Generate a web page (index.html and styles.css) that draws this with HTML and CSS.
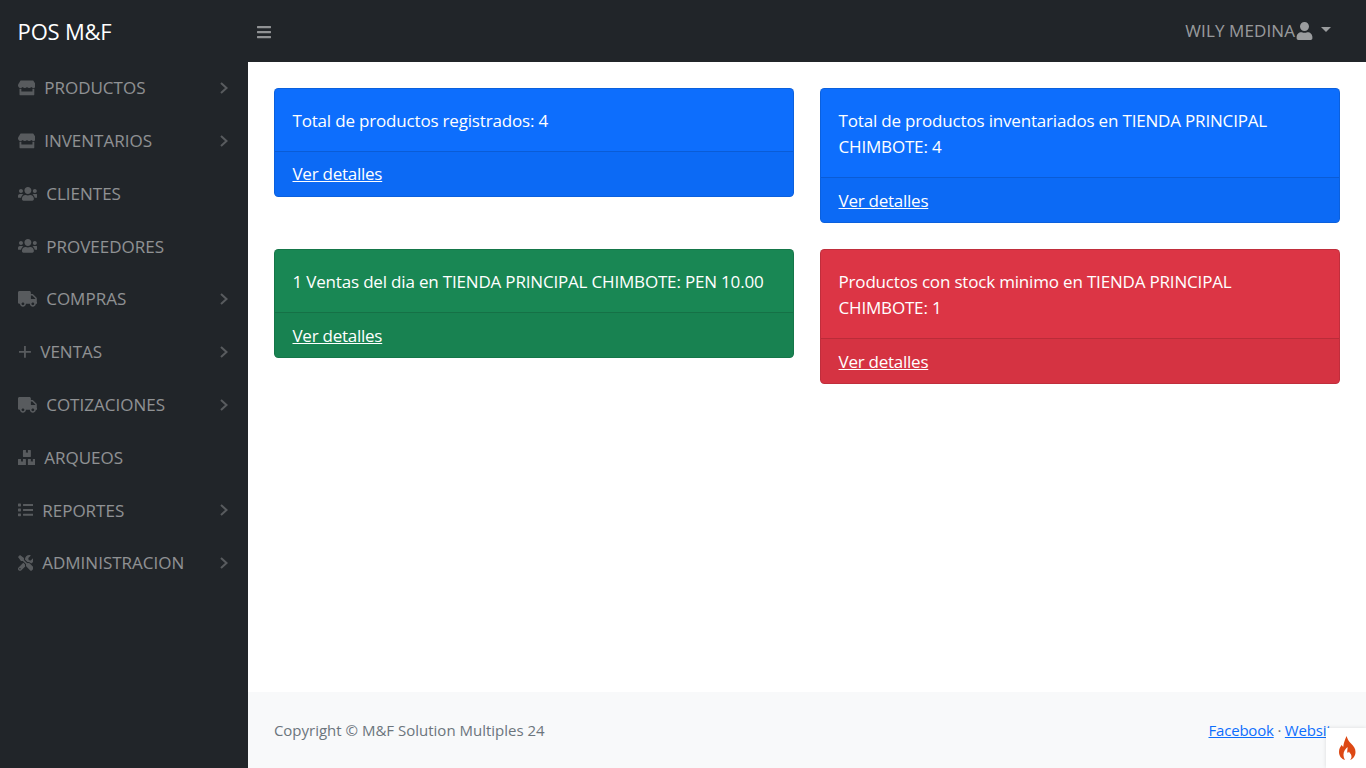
FILE: index.html
```html
<!DOCTYPE html>
<html lang="es">
<head>
<meta charset="utf-8">
<title>POS M&amp;F</title>
<link rel="stylesheet" href="styles.css">
</head>
<body>
<header class="topbar">
  <a class="brand" href="#">POS M&amp;F</a>
  <button class="toggle" type="button" aria-label="menu">
    <svg class="ico-bars" viewBox="0 0 448 512"><path d="M16 132h416c8.837 0 16-7.163 16-16V76c0-8.837-7.163-16-16-16H16C7.163 60 0 67.163 0 76v40c0 8.837 7.163 16 16 16zm0 160h416c8.837 0 16-7.163 16-16v-40c0-8.837-7.163-16-16-16H16c-8.837 0-16 7.163-16 16v40c0 8.837 7.163 16 16 16zm0 160h416c8.837 0 16-7.163 16-16v-40c0-8.837-7.163-16-16-16H16c-8.837 0-16 7.163-16 16v40c0 8.837 7.163 16 16 16z"/></svg>
  </button>
  <a class="user" href="#">
    <span class="user-name">WILY MEDINA</span>
    <svg class="ico-user" viewBox="0 0 448 512"><path d="M224 256c70.7 0 128-57.3 128-128S294.7 0 224 0 96 57.3 96 128s57.3 128 128 128zm89.6 32h-16.7c-22.2 10.2-46.9 16-72.9 16s-50.6-5.8-72.9-16h-16.7C60.2 288 0 348.2 0 422.4V464c0 26.5 21.5 48 48 48h352c26.5 0 48-21.5 48-48v-41.6c0-74.2-60.2-134.4-134.4-134.4z"/></svg>
    <i class="caret"></i>
  </a>
</header>
<div class="shell">
  <nav class="sidebar">
    <a class="nav-link" href="#"><svg class="ico w-store" viewBox="0 0 616 512"><path d="M602 118.6L537.1 15C531.3 5.7 521 0 510 0H106C95 0 84.7 5.7 78.9 15L14 118.6c-33.9 54.1-3.9 129.3 59.4 137.9 4.6.6 9.1.9 13.7.9 29.9 0 56.4-13.1 74.8-33.4 18.4 20.3 45 33.4 74.8 33.4 29.9 0 56.4-13.1 74.8-33.4 18.4 20.3 45 33.4 74.8 33.4 29.9 0 56.4-13.1 74.8-33.4 18.5 20.3 45 33.4 74.8 33.4 4.7 0 9.2-.3 13.7-.9 63.5-8.5 93.6-83.7 59.6-137.9zM529.5 288c-10 0-19.9-1.5-29.5-3.8V384H116v-99.8c-9.6 2.2-19.5 3.8-29.5 3.8-6 0-12.1-.4-18-1.2-5.6-.8-11.1-2.1-16.4-3.6V480c0 17.7 14.3 32 32 32h448c17.7 0 32-14.3 32-32V283.2c-5.4 1.6-10.8 2.9-16.4 3.6-6.1.8-12.1 1.2-18.2 1.2z"/></svg><span class="label">PRODUCTOS</span><svg class="chev" viewBox="0 0 8 12"><path d="M1 1l5.5 5L1 11"/></svg></a>
    <a class="nav-link" href="#"><svg class="ico w-store" viewBox="0 0 616 512"><path d="M602 118.6L537.1 15C531.3 5.7 521 0 510 0H106C95 0 84.7 5.7 78.9 15L14 118.6c-33.9 54.1-3.9 129.3 59.4 137.9 4.6.6 9.1.9 13.7.9 29.9 0 56.4-13.1 74.8-33.4 18.4 20.3 45 33.4 74.8 33.4 29.9 0 56.4-13.1 74.8-33.4 18.4 20.3 45 33.4 74.8 33.4 29.9 0 56.4-13.1 74.8-33.4 18.5 20.3 45 33.4 74.8 33.4 4.7 0 9.2-.3 13.7-.9 63.5-8.5 93.6-83.7 59.6-137.9zM529.5 288c-10 0-19.9-1.5-29.5-3.8V384H116v-99.8c-9.6 2.2-19.5 3.8-29.5 3.8-6 0-12.1-.4-18-1.2-5.6-.8-11.1-2.1-16.4-3.6V480c0 17.7 14.3 32 32 32h448c17.7 0 32-14.3 32-32V283.2c-5.4 1.6-10.8 2.9-16.4 3.6-6.1.8-12.1 1.2-18.2 1.2z"/></svg><span class="label">INVENTARIOS</span><svg class="chev" viewBox="0 0 8 12"><path d="M1 1l5.5 5L1 11"/></svg></a>
    <a class="nav-link" href="#"><svg class="ico w-wide" viewBox="0 0 640 512"><path d="M96 224c35.3 0 64-28.7 64-64s-28.7-64-64-64-64 28.7-64 64 28.7 64 64 64zm448 0c35.3 0 64-28.7 64-64s-28.7-64-64-64-64 28.7-64 64 28.7 64 64 64zm32 32h-64c-17.6 0-33.5 7.1-45.1 18.6 40.3 22.1 68.9 62 75.1 109.4h66c17.7 0 32-14.3 32-32v-32c0-35.3-28.7-64-64-64zm-256 0c61.9 0 112-50.1 112-112S381.9 32 320 32 208 82.1 208 144s50.1 112 112 112zm76.8 32h-8.3c-20.8 10-43.9 16-68.5 16s-47.6-6-68.5-16h-8.3C179.6 288 128 339.6 128 403.2V432c0 26.5 21.5 48 48 48h288c26.5 0 48-21.5 48-48v-28.8c0-63.6-51.6-115.2-115.2-115.2zm-223.7-13.4C161.5 263.1 145.6 256 128 256H64c-35.3 0-64 28.7-64 64v32c0 17.7 14.3 32 32 32h65.9c6.3-47.4 34.9-87.3 75.2-109.4z"/></svg><span class="label">CLIENTES</span></a>
    <a class="nav-link" href="#"><svg class="ico w-wide" viewBox="0 0 640 512"><path d="M96 224c35.3 0 64-28.7 64-64s-28.7-64-64-64-64 28.7-64 64 28.7 64 64 64zm448 0c35.3 0 64-28.7 64-64s-28.7-64-64-64-64 28.7-64 64 28.7 64 64 64zm32 32h-64c-17.6 0-33.5 7.1-45.1 18.6 40.3 22.1 68.9 62 75.1 109.4h66c17.7 0 32-14.3 32-32v-32c0-35.3-28.7-64-64-64zm-256 0c61.9 0 112-50.1 112-112S381.9 32 320 32 208 82.1 208 144s50.1 112 112 112zm76.8 32h-8.3c-20.8 10-43.9 16-68.5 16s-47.6-6-68.5-16h-8.3C179.6 288 128 339.6 128 403.2V432c0 26.5 21.5 48 48 48h288c26.5 0 48-21.5 48-48v-28.8c0-63.6-51.6-115.2-115.2-115.2zm-223.7-13.4C161.5 263.1 145.6 256 128 256H64c-35.3 0-64 28.7-64 64v32c0 17.7 14.3 32 32 32h65.9c6.3-47.4 34.9-87.3 75.2-109.4z"/></svg><span class="label">PROVEEDORES</span></a>
    <a class="nav-link" href="#"><svg class="ico w-wide" viewBox="0 0 640 512"><path d="M624 352h-16V243.9c0-12.7-5.1-24.9-14.1-33.9L494 110.1c-9-9-21.2-14.1-33.9-14.1H416V48c0-26.5-21.5-48-48-48H48C21.5 0 0 21.5 0 48v320c0 26.5 21.5 48 48 48h16c0 53 43 96 96 96s96-43 96-96h128c0 53 43 96 96 96s96-43 96-96h48c8.8 0 16-7.2 16-16v-32c0-8.8-7.2-16-16-16zM160 464c-26.5 0-48-21.5-48-48s21.5-48 48-48 48 21.5 48 48-21.5 48-48 48zm320 0c-26.5 0-48-21.5-48-48s21.5-48 48-48 48 21.5 48 48-21.5 48-48 48zm80-208H416V144h44.1l99.9 99.9V256z"/></svg><span class="label">COMPRAS</span><svg class="chev" viewBox="0 0 8 12"><path d="M1 1l5.5 5L1 11"/></svg></a>
    <a class="nav-link" href="#"><svg class="ico w-plus" viewBox="0 0 14 14"><path class="plus" d="M7 1v12M1 7h12"/></svg><span class="label">VENTAS</span><svg class="chev" viewBox="0 0 8 12"><path d="M1 1l5.5 5L1 11"/></svg></a>
    <a class="nav-link" href="#"><svg class="ico w-wide" viewBox="0 0 640 512"><path d="M624 352h-16V243.9c0-12.7-5.1-24.9-14.1-33.9L494 110.1c-9-9-21.2-14.1-33.9-14.1H416V48c0-26.5-21.5-48-48-48H48C21.5 0 0 21.5 0 48v320c0 26.5 21.5 48 48 48h16c0 53 43 96 96 96s96-43 96-96h128c0 53 43 96 96 96s96-43 96-96h48c8.8 0 16-7.2 16-16v-32c0-8.8-7.2-16-16-16zM160 464c-26.5 0-48-21.5-48-48s21.5-48 48-48 48 21.5 48 48-21.5 48-48 48zm320 0c-26.5 0-48-21.5-48-48s21.5-48 48-48 48 21.5 48 48-21.5 48-48 48zm80-208H416V144h44.1l99.9 99.9V256z"/></svg><span class="label">COTIZACIONES</span><svg class="chev" viewBox="0 0 8 12"><path d="M1 1l5.5 5L1 11"/></svg></a>
    <a class="nav-link" href="#"><svg class="ico w-boxes" viewBox="0 0 576 512"><path d="M560 288h-80v96l-32-21.3-32 21.3v-96h-80c-8.8 0-16 7.2-16 16v192c0 8.8 7.2 16 16 16h224c8.8 0 16-7.2 16-16V304c0-8.8-7.2-16-16-16zm-384-64h224c8.8 0 16-7.2 16-16V16c0-8.8-7.2-16-16-16h-80v96l-32-21.3L256 96V0h-80c-8.8 0-16 7.2-16 16v192c0 8.8 7.2 16 16 16zm64 64h-80v96l-32-21.3L96 384v-96H16c-8.8 0-16 7.2-16 16v192c0 8.8 7.2 16 16 16h224c8.8 0 16-7.2 16-16V304c0-8.8-7.2-16-16-16z"/></svg><span class="label">ARQUEOS</span></a>
    <a class="nav-link" href="#"><svg class="ico w-one" viewBox="0 0 512 512"><path d="M80 368H16a16 16 0 0 0-16 16v64a16 16 0 0 0 16 16h64a16 16 0 0 0 16-16v-64a16 16 0 0 0-16-16zm0-320H16A16 16 0 0 0 0 64v64a16 16 0 0 0 16 16h64a16 16 0 0 0 16-16V64a16 16 0 0 0-16-16zm0 160H16a16 16 0 0 0-16 16v64a16 16 0 0 0 16 16h64a16 16 0 0 0 16-16v-64a16 16 0 0 0-16-16zm416 176H176a16 16 0 0 0-16 16v32a16 16 0 0 0 16 16h320a16 16 0 0 0 16-16v-32a16 16 0 0 0-16-16zm0-320H176a16 16 0 0 0-16 16v32a16 16 0 0 0 16 16h320a16 16 0 0 0 16-16V80a16 16 0 0 0-16-16zm0 160H176a16 16 0 0 0-16 16v32a16 16 0 0 0 16 16h320a16 16 0 0 0 16-16v-32a16 16 0 0 0-16-16z"/></svg><span class="label">REPORTES</span><svg class="chev" viewBox="0 0 8 12"><path d="M1 1l5.5 5L1 11"/></svg></a>
    <a class="nav-link" href="#"><svg class="ico w-one" viewBox="0 0 512 512"><path d="M501.1 395.7L384 278.6c-23.1-23.1-57.6-27.6-85.4-13.9L192 158.1V96L64 0 0 64l96 128h62.1l106.6 106.6c-13.6 27.8-9.2 62.3 13.9 85.4l117.1 117.1c14.6 14.6 38.2 14.6 52.7 0l52.7-52.7c14.5-14.6 14.5-38.2 0-52.7zM331.7 225c28.3 0 54.9 11 74.9 31l19.4 19.4c15.8-6.9 30.8-16.5 43.8-29.5 37.1-37.1 49.7-89.3 37.9-136.7-2.2-9-13.5-12.1-20.1-5.5l-74.4 74.4-67.9-11.3L334 98.9l74.4-74.4c6.6-6.6 3.4-17.9-5.7-20.2-47.4-11.7-99.6.9-136.6 37.9-28.5 28.5-41.9 66.1-41.2 103.6l82.1 82.1c8.1-1.9 16.5-2.9 24.7-2.9zm-103.9 82l-56.7-56.7L18.7 402.8c-25 25-25 65.5 0 90.5s65.5 25 90.5 0l123.6-123.6c-7.6-19.9-9.9-41.6-5-62.7zM64 472c-13.2 0-24-10.8-24-24 0-13.3 10.7-24 24-24s24 10.7 24 24c0 13.2-10.7 24-24 24z"/></svg><span class="label">ADMINISTRACION</span><svg class="chev" viewBox="0 0 8 12"><path d="M1 1l5.5 5L1 11"/></svg></a>
  </nav>
  <div class="main">
    <main class="content">
      <section class="card blue">
        <div class="card-body">Total de productos registrados: 4</div>
        <div class="card-footer"><a href="#">Ver detalles</a></div>
      </section>
      <section class="card blue">
        <div class="card-body">Total de productos inventariados en TIENDA PRINCIPAL CHIMBOTE: 4</div>
        <div class="card-footer"><a href="#">Ver detalles</a></div>
      </section>
      <section class="card green">
        <div class="card-body">1 Ventas del dia en TIENDA PRINCIPAL CHIMBOTE: PEN 10.00</div>
        <div class="card-footer"><a href="#">Ver detalles</a></div>
      </section>
      <section class="card red">
        <div class="card-body">Productos con stock minimo en TIENDA PRINCIPAL CHIMBOTE: 1</div>
        <div class="card-footer"><a href="#">Ver detalles</a></div>
      </section>
    </main>
    <footer class="footer">
      <span class="copy">Copyright © M&amp;F Solution Multiples 24</span>
      <span class="links"><a href="#">Facebook</a> · <a href="#">Website</a></span>
    </footer>
  </div>
</div>
<div class="flame-badge">
  <svg class="flame" viewBox="0 0 17 24"><path d="M7.500 0C8.500 3 9.500 5 12 7.500c2.800 2.800 4.500 5 4.500 8.500 0 4-2.500 7-5.500 8 1.500-1.500 2-3.500 1-5.500-.7-1.400-1.500-1.500-2-3-.5 1-1 1.500-1.500 1.200C7.800 15.800 8.800 13 8.500 11 6.500 13 4.500 15 4.500 18.500c0 2.200.5 4 1.500 5.500C2.500 23 0 20 0 16c0-3 1.200-5 2.800-7.200.3 1 .7 1.700 1.500 2C4.500 7 6 4 7.500 0z"/></svg>
</div>
</body>
</html>
```
FILE: styles.css
```css
* { box-sizing: border-box; }
html, body { height: 100%; }
body {
  margin: 0;
  display: flex;
  flex-direction: column;
  overflow: hidden;
  font-family: "Open Sans", "Noto Sans", sans-serif;
  font-size: 17px;
  letter-spacing: -0.18px;
  line-height: 26.4px;
  background: #fff;
  color: #212529;
}
a { color: inherit; }

.topbar {
  flex: none;
  height: 61.6px;
  display: flex;
  align-items: center;
  background: #212529;
}
.brand {
  width: 247.5px;
  padding-left: 17.6px;
  font-size: 22px;
  letter-spacing: -0.2px;
  color: #fff;
  text-decoration: none;
}
.toggle {
  display: flex;
  align-items: center;
  padding: 2px 0 0 9.5px;
  border: 0;
  background: none;
}
.ico-bars { width: 14px; height: 16px; fill: rgba(255,255,255,.5); }
.user {
  margin-left: auto;
  margin-right: 35px;
  display: flex;
  align-items: center;
  letter-spacing: 0.1px;
  color: rgba(255,255,255,.55);
  text-decoration: none;
}
.user-name { padding-top: 1px; }
.ico-user { width: 17px; height: 18px; margin-left: 1px; fill: rgba(255,255,255,.55); }
.caret {
  margin-left: 8px;
  border-top: 5px solid rgba(255,255,255,.55);
  border-left: 5px solid transparent;
  border-right: 5px solid transparent;
  margin-bottom: 3px;
}

.shell { flex: 1; min-height: 0; display: flex; }
.sidebar {
  flex: none;
  width: 247.5px;
  background: #212529;
}
.nav-link {
  display: flex;
  align-items: center;
  height: 52.8px;
  padding: 0 19.5px 0 17.6px;
  letter-spacing: 0;
  color: rgba(255,255,255,.5);
  text-decoration: none;
}
.ico { flex: none; height: 15.84px; margin-right: 8.8px; fill: rgba(255,255,255,.25); }
.w-store { width: 17.8px; }
.w-wide { width: 19.8px; }
.w-plus { width: 13.9px; }
.w-boxes { width: 17.8px; }
.w-one { width: 15.84px; }
.plus { fill: none; stroke: rgba(255,255,255,.25); stroke-width: 1.8; }
.label { flex: 1; padding-top: 1px; }
.chev { flex: none; width: 8px; height: 12px; fill: none; stroke: rgba(255,255,255,.25); stroke-width: 2; }

.main { flex: 1; min-width: 0; display: flex; flex-direction: column; }
.content {
  flex: 1;
  padding: 26.4px;
  display: grid;
  grid-template-columns: 1fr 1fr;
  column-gap: 26.4px;
  row-gap: 26.4px;
  align-items: start;
  align-content: start;
}
.card {
  border: 1px solid rgba(0,0,0,.125);
  border-radius: 4.4px;
  color: #fff;
  background-clip: border-box;
  overflow: hidden;
}
.blue { background: #0d6efd; }
.green { background: #198754; }
.red { background: #dc3545; }
.card-body { padding: 18.6px 17.6px 16.6px; }
.card-footer {
  padding: 9.8px 17.6px 7.8px;
  background: rgba(0,0,0,.03);
  border-top: 1px solid rgba(0,0,0,.125);
}
.card-footer a { color: #fff; letter-spacing: -0.25px; }

.footer {
  flex: none;
  height: 76px;
  padding: 0 26.4px;
  display: flex;
  align-items: center;
  justify-content: space-between;
  background: #f8f9fa;
  font-size: 15px;
  letter-spacing: 0;
  color: #6c757d;
}
.links { letter-spacing: -0.2px; }
.links a { color: #0d6efd; }

.flame-badge {
  position: fixed;
  right: 0;
  bottom: 0;
  width: 40px;
  height: 40px;
  padding-left: 2px;
  display: flex;
  align-items: center;
  justify-content: center;
  background: #fff;
  box-shadow: 0 0 4px rgba(0,0,0,.12);
}
.flame { width: 17px; height: 24px; fill: #dd4814; }
```
